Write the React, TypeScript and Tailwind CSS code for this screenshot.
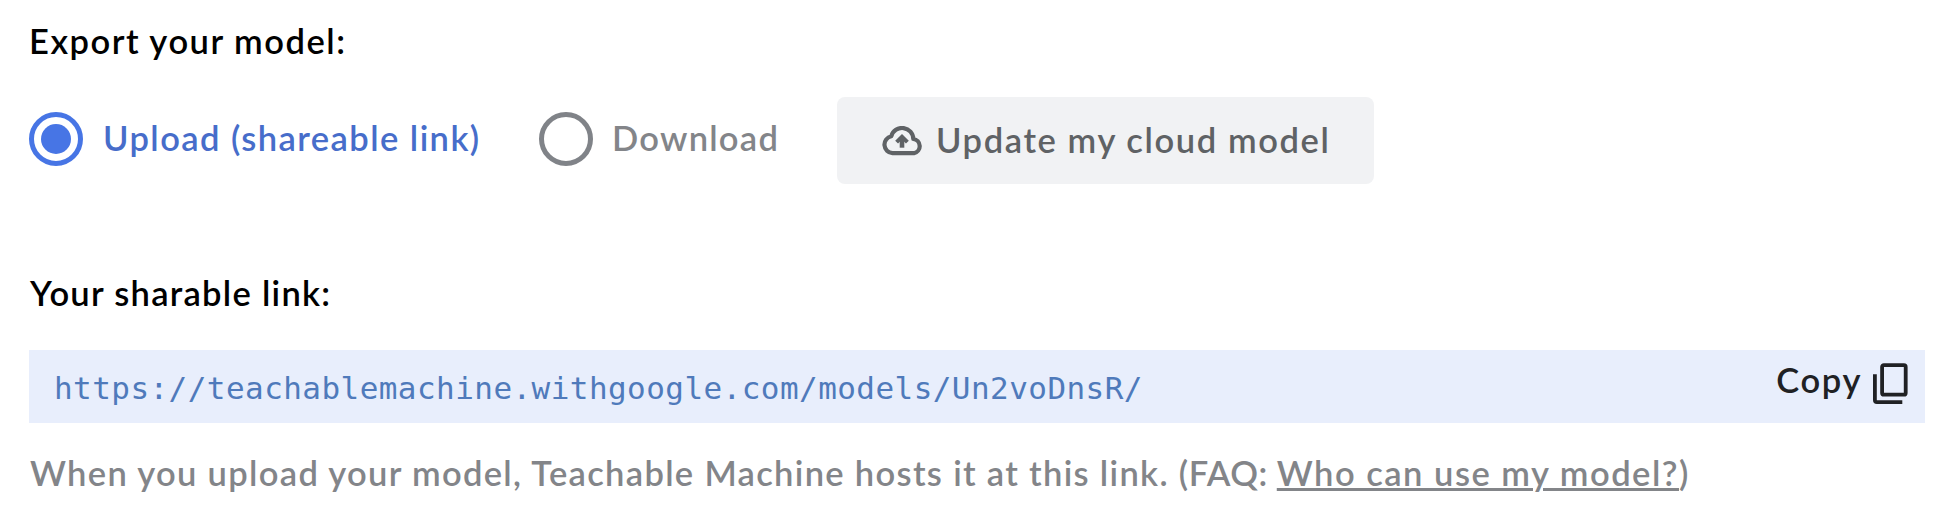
import React from "react";

function Radio({ checked }: { checked?: boolean }) {
  return (
    <span
      className={
        checked
          ? "flex size-[54px] shrink-0 items-center justify-center rounded-full border-5 border-[#4775e5]"
          : "flex size-[54px] shrink-0 items-center justify-center rounded-full border-5 border-[#808388]"
      }
    >
      {checked && <span className="size-[30px] rounded-full bg-[#4775e5]" />}
    </span>
  );
}

function CloudUploadIcon() {
  return (
    <svg width="41" height="30" viewBox="0 0 41 30" fill="none" stroke="currentColor" className="shrink-0">
      <path
        d="M10.5 27.2a8.6 8.6 0 0 1-1.2-17A11.2 11.2 0 0 1 31.3 13a7.2 7.2 0 0 1 .7 14.2z"
        strokeWidth="4.2"
        strokeLinejoin="round"
      />
      <path d="M14.6 16.2L20 10.8l5.4 5.4" strokeWidth="4" />
      <path d="M20 11.5v10.2" strokeWidth="4.6" />
    </svg>
  );
}

function CopyIcon() {
  return (
    <svg width="35" height="41" viewBox="0 0 35 41" fill="none" stroke="currentColor" strokeWidth="3.8" className="shrink-0">
      <rect x="9.1" y="2.1" width="23.6" height="29.6" rx="1.8" />
      <path d="M1.9 11.3v25.8a2 2 0 0 0 2 2h25.4" />
    </svg>
  );
}

export default function App() {
  return (
    <main className="h-[516px] w-[1950px] overflow-hidden bg-white pl-[29px] pt-[21px] font-['Lato',sans-serif] text-[34.5px] leading-10 font-semibold whitespace-nowrap text-black">
      <h2 className="tracking-[1.52px]">Export your model:</h2>

      <div className="mt-9 flex h-[87px]">
        <label className="flex h-[84px] w-[453px] items-center">
          <Radio checked />
          <span className="ml-5 pb-[3px] tracking-[1.44px] text-[#476dca]">Upload (shareable link)</span>
        </label>
        <label className="ml-[57px] flex h-[84px] items-center">
          <Radio />
          <span className="ml-[19px] pb-[3px] tracking-[1.26px] text-[#838589]">Download</span>
        </label>
        <button className="mr-[576px] ml-auto flex h-[87px] w-[537px] shrink-0 items-center rounded-lg bg-[#f1f2f4] pl-[45px] text-[#5f6265]">
          <CloudUploadIcon />
          <span className="ml-[13px] pb-px tracking-[1.6px]">Update my cloud model</span>
        </button>
      </div>

      <h2 className="mt-[89px] pl-px tracking-[1.28px]">Your sharable link:</h2>

      <div className="mt-[37px] flex h-[73px] w-[1896px] items-center bg-[#e8eefc] pl-[25px] pr-[17px]">
        <span className="pt-[2px] font-['DejaVu_Sans_Mono',monospace] text-[31px] font-normal tracking-[0.44px] text-[#4f7abb]">
          https://teachablemachine.withgoogle.com/models/Un2voDnsR/
        </span>
        <button className="ml-auto flex items-center text-[#202124]">
          <span className="pb-[13px] tracking-[1.6px]">Copy</span>
          <span className="ml-[11px] pb-[6px]">
            <CopyIcon />
          </span>
        </button>
      </div>

      <p className="mt-[30px] pl-px text-[#838589]">
        <span className="tracking-[1.32px]">When you upload your model, Teachable Machine hosts it at this link. </span>
        <span className="tracking-[0.5px]">(FAQ: </span>
        <a className="tracking-[1.5px] underline decoration-[2.5px] underline-offset-[2px]">Who can use my model?</a>)
      </p>
    </main>
  );
}
